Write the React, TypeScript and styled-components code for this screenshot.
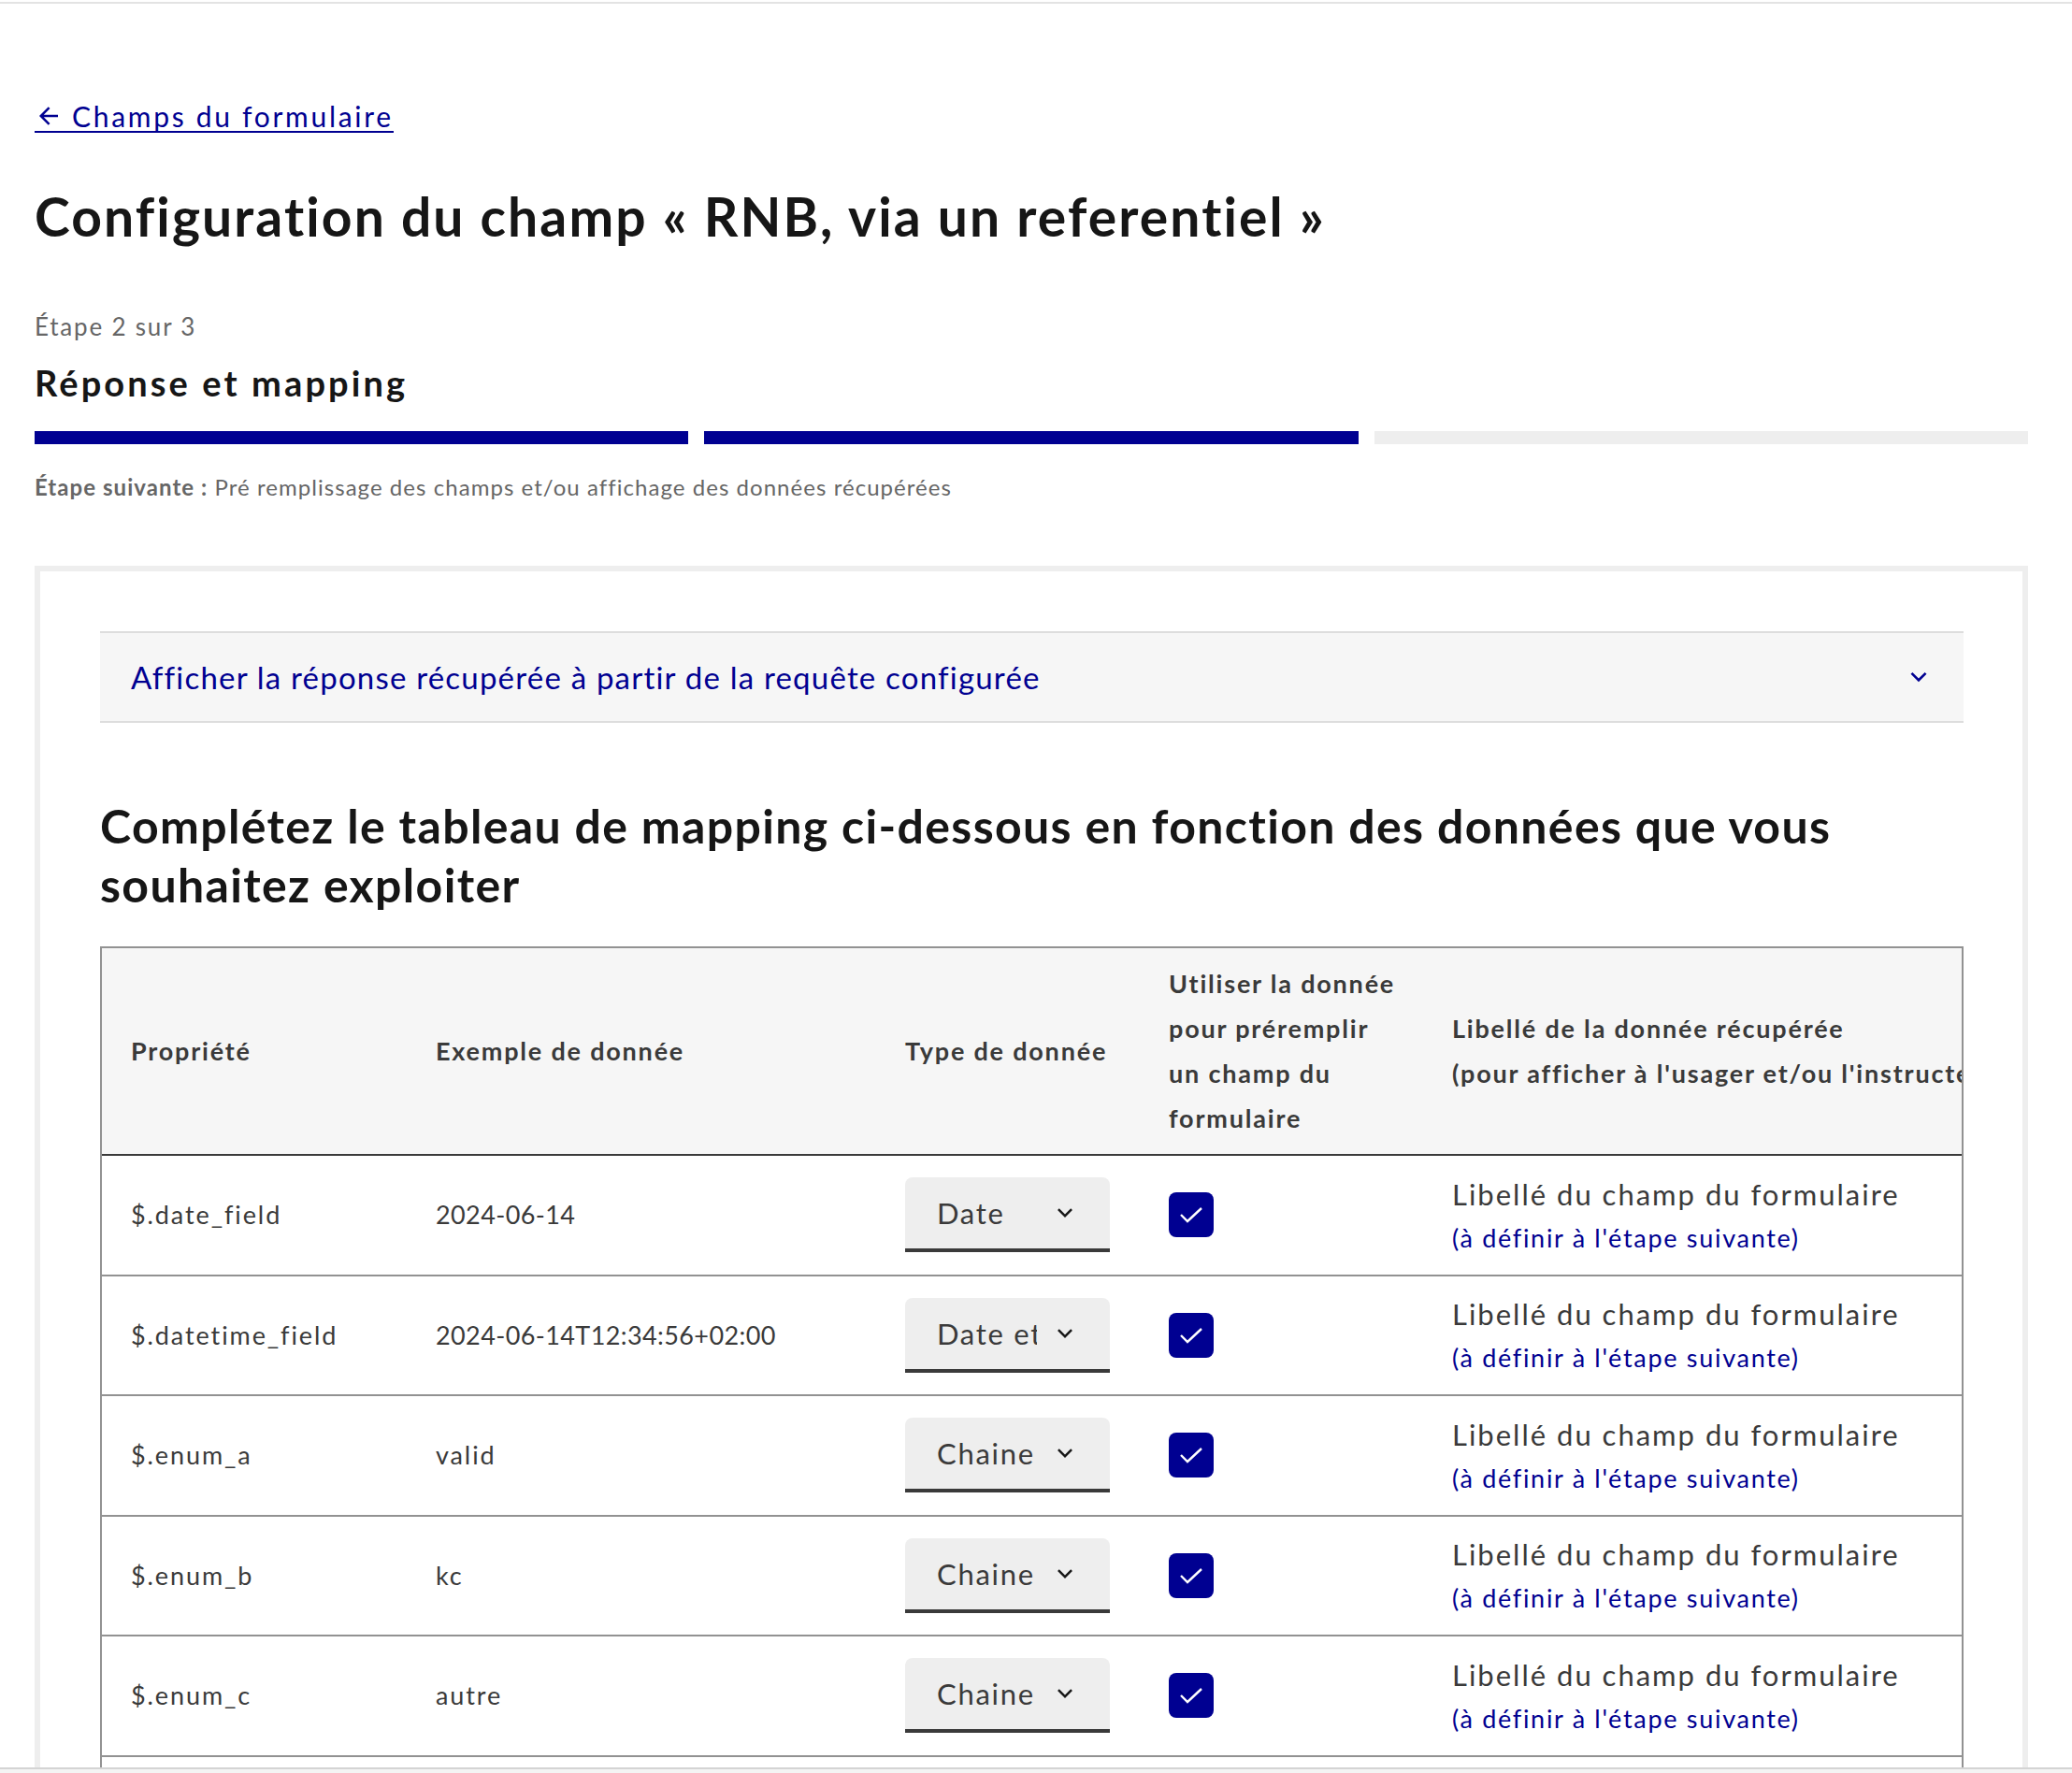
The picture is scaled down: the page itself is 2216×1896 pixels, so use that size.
import React from 'react';
import styled, { createGlobalStyle } from 'styled-components';

const GlobalStyle = createGlobalStyle`
  html, body {
    margin: 0;
    padding: 0;
    background: #ffffff;
  }
  body {
    font-family: Lato, "Noto Sans", sans-serif;
    color: #161616;
  }
  * {
    box-sizing: border-box;
  }
`;

const TopRule = styled.div`
  height: 2px;
  margin-top: 2px;
  background: #e3e3e3;
`;

const Main = styled.main`
  padding: 0 47px 0 37px;
`;

const BackLink = styled.a`
  display: inline-flex;
  align-items: center;
  gap: 10px;
  margin-top: 102px;
  font-size: 30px;
  line-height: 36px;
  letter-spacing: 2.7px;
  color: #000091;
  text-decoration: none;
  background-image: linear-gradient(#000091, #000091);
  background-size: 100% 2px;
  background-position: 0 100%;
  background-repeat: no-repeat;
`;

const Title = styled.h1`
  margin: 54px 0 0;
  font-size: 57px;
  line-height: 71px;
  font-weight: 700;
  letter-spacing: 2.1px;
`;

const StepState = styled.p`
  margin: 66px 0 0;
  font-size: 26px;
  line-height: 32px;
  letter-spacing: 1.8px;
  color: #666666;
`;

const StepTitle = styled.h2`
  margin: 22px 0 0;
  font-size: 38px;
  line-height: 44px;
  font-weight: 700;
  letter-spacing: 3.1px;
`;

const StepBars = styled.div`
  display: grid;
  grid-template-columns: repeat(3, 1fr);
  gap: 17px;
  margin-top: 30px;
`;

const StepBar = styled.div<{ $done?: boolean }>`
  height: 14px;
  background: ${(p) => (p.$done ? '#000091' : '#eeeeee')};
`;

const StepNext = styled.p`
  margin: 30px 0 0;
  font-size: 24px;
  line-height: 32px;
  letter-spacing: 1.05px;
  color: #666666;
  b {
    font-weight: 700;
  }
`;

const Card = styled.section`
  margin-top: 68px;
  border: 6px solid #eeeeee;
  padding: 64px 63px 0 64px;
`;

const Accordion = styled.button`
  display: flex;
  width: 100%;
  height: 98px;
  align-items: center;
  justify-content: space-between;
  padding: 0 32px 0 33px;
  border: 0;
  border-top: 2px solid #dddddd;
  border-bottom: 2px solid #dddddd;
  background: #f6f6f6;
  font-family: inherit;
  font-size: 33px;
  letter-spacing: 1.2px;
  color: #000091;
  cursor: pointer;
`;

const SectionTitle = styled.h3`
  margin: 79px 0 0;
  font-size: 50px;
  line-height: 63px;
  font-weight: 700;
  letter-spacing: 1.35px;
`;

const TableWrap = styled.div`
  margin-top: 34px;
  border: 2px solid #929292;
  border-bottom: 0;
  overflow: hidden;
`;

const Grid = styled.div`
  display: grid;
  grid-template-columns: 326px 502px 282px 303px 800px;
  width: max-content;
`;

const HeadRow = styled(Grid)`
  min-height: 222px;
  background: #f6f6f6;
  border-bottom: 2px solid #3a3a3a;
  align-items: center;
`;

const HeadCell = styled.div`
  padding: 0 31px;
  font-size: 27px;
  line-height: 48px;
  font-weight: 700;
  letter-spacing: 1.8px;
  color: #3a3a3a;
  white-space: nowrap;
`;

const Row = styled(Grid)`
  height: 128.5px;
  border-bottom: 2px solid #929292;
  align-items: center;
`;

const Cell = styled.div<{ $tracking?: number }>`
  padding: 0 31px;
  font-size: 27px;
  line-height: 36px;
  letter-spacing: ${(p) => p.$tracking ?? 1.9}px;
  color: #3a3a3a;
  white-space: nowrap;
`;

const Select = styled.div`
  position: relative;
  width: 219px;
  height: 80px;
  padding: 0 78px 0 34px;
  display: flex;
  align-items: center;
  background: #eeeeee;
  border-radius: 8px 8px 0 0;
  border-bottom: 4px solid #3a3a3a;
  font-size: 31px;
  letter-spacing: 1.7px;
  color: #3a3a3a;
  white-space: nowrap;
  overflow: hidden;
  svg {
    position: absolute;
    right: 33px;
    top: 23px;
  }
`;

const SelectValue = styled.span`
  display: block;
  overflow: hidden;
`;

const Checkbox = styled.span`
  display: flex;
  width: 48px;
  height: 48px;
  align-items: center;
  justify-content: center;
  border-radius: 8px;
  background: #000091;
`;

const LabelMain = styled.div`
  font-size: 31px;
  line-height: 40px;
  letter-spacing: 2px;
  color: #3a3a3a;
`;

const LabelHint = styled.div`
  margin-top: 9px;
  font-size: 27px;
  line-height: 36px;
  letter-spacing: 1.7px;
  color: #000091;
`;

const BrowserEdge = styled.div`
  position: fixed;
  left: 0;
  right: 0;
  bottom: 0;
  height: 6px;
  border-top: 2px solid #d4d4d4;
  background: #f4f4f4;
`;

const ArrowLeft = () => (
  <svg width="30" height="30" viewBox="0 0 24 24" fill="#000091" aria-hidden>
    <path d="M7.828 11H20v2H7.828l5.364 5.364-1.414 1.414L4 12l7.778-7.778 1.414 1.414L7.828 11Z" />
  </svg>
);

const Chevron = ({ color, size }: { color: string; size: number }) => (
  <svg width={size} height={size} viewBox="0 0 24 24" fill={color} aria-hidden>
    <path d="M12 13.172l4.95-4.95 1.414 1.414L12 16 5.636 9.636 7.05 8.222z" />
  </svg>
);

const Check = () => (
  <svg width="26" height="20" viewBox="0 0 26 20" aria-hidden>
    <polyline points="2,10 9,17 24,3" fill="none" stroke="#ffffff" strokeWidth="2.4" />
  </svg>
);

const rows = [
  { prop: '$.date_field', example: '2024-06-14', type: 'Date' },
  { prop: '$.datetime_field', example: '2024-06-14T12:34:56+02:00', type: 'Date et heure' },
  { prop: '$.enum_a', example: 'valid', type: 'Chaine' },
  { prop: '$.enum_b', example: 'kc', type: 'Chaine' },
  { prop: '$.enum_c', example: 'autre', type: 'Chaine' },
  { prop: '$.integer_field', example: '42', type: 'Nombre' },
];

// digits in the reference font are narrower than its letters
const trackingFor = (value: string) => (/^[0-9:+T-]+$/.test(value) ? 0.4 : 1.9);

export default function App() {
  return (
    <>
      <GlobalStyle />
      <TopRule />
      <Main>
        <BackLink href="#">
          <ArrowLeft />
          Champs du formulaire
        </BackLink>
        <Title>Configuration du champ « RNB, via un referentiel »</Title>

        <StepState>Étape 2 sur 3</StepState>
        <StepTitle>Réponse et mapping</StepTitle>
        <StepBars>
          <StepBar $done />
          <StepBar $done />
          <StepBar />
        </StepBars>
        <StepNext>
          <b>Étape suivante :</b> Pré remplissage des champs et/ou affichage des données récupérées
        </StepNext>

        <Card>
          <Accordion type="button">
            Afficher la réponse récupérée à partir de la requête configurée
            <Chevron color="#000091" size={32} />
          </Accordion>

          <SectionTitle>
            Complétez le tableau de mapping ci-dessous en fonction des données que vous souhaitez exploiter
          </SectionTitle>

          <TableWrap>
            <HeadRow>
              <HeadCell>Propriété</HeadCell>
              <HeadCell>Exemple de donnée</HeadCell>
              <HeadCell>Type de donnée</HeadCell>
              <HeadCell>
                Utiliser la donnée
                <br />
                pour préremplir
                <br />
                un champ du
                <br />
                formulaire
              </HeadCell>
              <HeadCell>
                Libellé de la donnée récupérée
                <br />
                (pour afficher à l'usager et/ou l'instructeur)
              </HeadCell>
            </HeadRow>
            {rows.map((r) => (
              <Row key={r.prop}>
                <Cell>{r.prop}</Cell>
                <Cell $tracking={trackingFor(r.example)}>{r.example}</Cell>
                <Cell>
                  <Select>
                    <SelectValue>{r.type}</SelectValue>
                    <Chevron color="#161616" size={30} />
                  </Select>
                </Cell>
                <Cell>
                  <Checkbox>
                    <Check />
                  </Checkbox>
                </Cell>
                <Cell>
                  <LabelMain>Libellé du champ du formulaire</LabelMain>
                  <LabelHint>(à définir à l'étape suivante)</LabelHint>
                </Cell>
              </Row>
            ))}
          </TableWrap>
        </Card>
      </Main>
      <BrowserEdge />
    </>
  );
}
